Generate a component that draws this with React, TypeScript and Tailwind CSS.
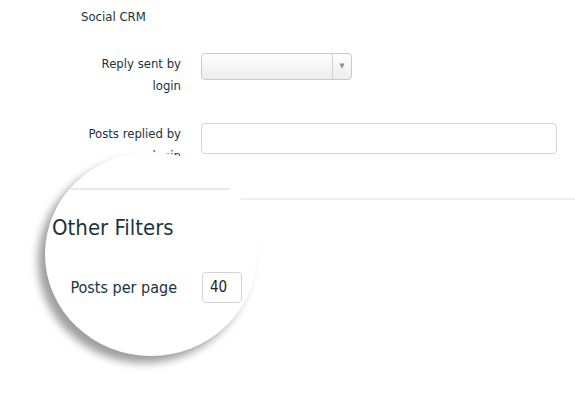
import React from 'react';

const font = { fontFamily: '"DejaVu Sans Condensed", "Liberation Sans Narrow", "Liberation Sans", sans-serif' };

export default function App() {
  return (
    <div className="relative w-[575px] h-[396px] overflow-hidden bg-white text-[#1a3342]" style={font}>
      {/* Social CRM filters */}
      <div className="pl-[81px] pt-[6px]">
        <div className="text-[13px] leading-[22px]">Social CRM</div>

        <div className="mt-[25px] flex items-start gap-[20px]">
          <label className="w-[100px] text-right text-[13px] leading-[22px]">Reply sent by login</label>
          <div className="flex h-[27px] w-[151px] rounded-[4px] border border-[#c9c9c9] bg-gradient-to-b from-white to-[#ececec]">
            <div className="flex-1" />
            <div className="flex w-[19px] items-center justify-center border-l border-[#d2d2d2]">
              <span className="text-[7px] leading-none text-[#8a8a8a]">▼</span>
            </div>
          </div>
        </div>

        <div className="mt-[26px] flex items-start gap-[20px]">
          <label className="w-[100px] text-right text-[13px] leading-[22px]">Posts replied by login</label>
          <input className="h-[31px] w-[356px] rounded-[4px] border border-[#d4d4d4] bg-white outline-none" />
        </div>
      </div>

      <div className="ml-[100px] mt-[31px] h-[2px] bg-[#eceef3]" />

      {/* magnifier lens */}
      <div className="absolute left-[45px] top-[152px] h-[204px] w-[212px] overflow-hidden rounded-[50%] bg-white shadow-[-7px_7px_9px_rgba(0,0,0,0.38)]">
        <div className="pt-[36px]">
          <div className="ml-[23px] h-[2px] w-[162px] bg-[#e8e9ef]" />
          <h3 className="ml-[7px] mt-[23px] text-[22px] leading-[30px]">Other Filters</h3>
          <div className="mt-[29px] flex items-center gap-[25px]">
            <label className="ml-[2px] w-[130px] whitespace-nowrap text-right text-[16px] leading-[24px]">Posts per page</label>
            <div className="flex h-[31px] w-[40px] items-center rounded-[4px] border border-[#d2d2d2] pl-[7px] text-[15px] text-[#2a1c1c]">
              40
            </div>
          </div>
        </div>
      </div>
    </div>
  );
}
